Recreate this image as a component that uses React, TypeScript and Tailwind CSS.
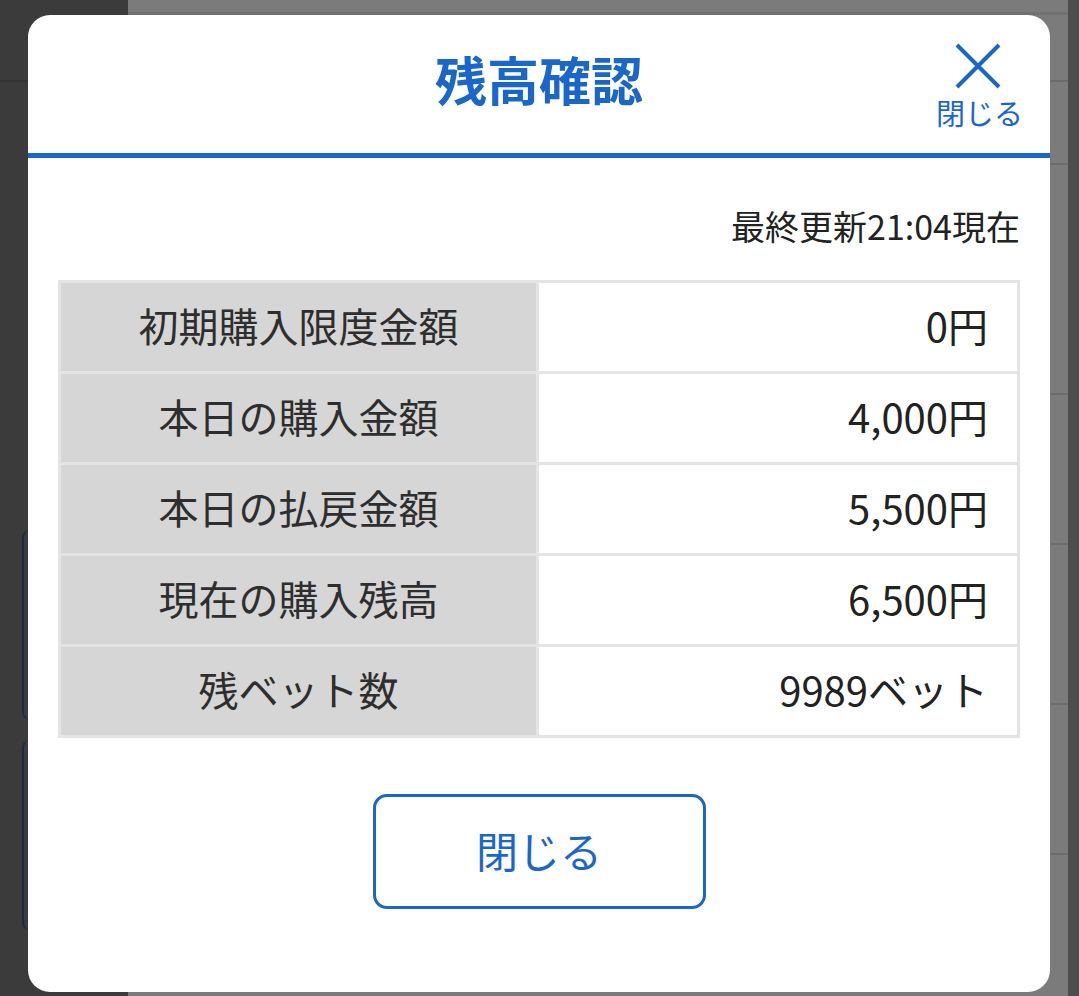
import React from 'react';

const rows: { label: string; value: string }[] = [
  { label: '初期購入限度金額', value: '0円' },
  { label: '本日の購入金額', value: '4,000円' },
  { label: '本日の払戻金額', value: '5,500円' },
  { label: '現在の購入残高', value: '6,500円' },
  { label: '残ベット数', value: '9989ベット' },
];

const font = { fontFamily: '"Noto Sans CJK JP", "Noto Sans", sans-serif' };

const Backdrop: React.FC = () => (
  <div className="flex h-full w-full">
    <div className="w-[128px] bg-[#3b3b3b] flex flex-col">
      <div className="h-[82px] border-b-[2px] border-[#333]" />
      <div className="mt-[448px] ml-[22px] h-[190px] w-[20px] rounded-l-[8px] border-l-[2px] border-[#1c2a40]" />
      <div className="mt-[20px] ml-[22px] h-[190px] w-[20px] rounded-l-[8px] border-l-[2px] border-[#1c2a40]" />
    </div>
    <div className="flex-1 bg-[#7b7b7b] flex flex-col">
      <div className="h-[15px] border-b-[3px] border-[#707070]" />
      <div className="h-[67px] border-b-[2px] border-[#6c6c6c]" />
      <div className="h-[83px] border-b-[2px] border-[#6c6c6c]" />
      <div className="h-[230px] border-b-[2px] border-[#6c6c6c]" />
      <div className="h-[150px] border-b-[2px] border-[#6c6c6c]" />
      <div className="h-[160px] border-b-[2px] border-[#6c6c6c]" />
      <div className="h-[150px] border-b-[2px] border-[#6c6c6c]" />
    </div>
    <div className="w-[11px] bg-[#4d4d4d]" />
  </div>
);

export default function App() {
  return (
    <div className="relative h-[996px] w-full overflow-hidden" style={font}>
      <Backdrop />
      <div className="absolute left-[28px] top-[15px] w-[1022px] h-[977px] bg-white rounded-[22px] overflow-hidden flex flex-col">
        <div className="relative h-[138px] flex items-center justify-center">
          <h1 className="text-[52px] font-bold text-[#1b66c9] leading-none mb-[10px]">残高確認</h1>
          <button className="absolute right-[29px] top-[28px] flex flex-col items-center text-[#1b66c9]">
            <svg width="48" height="46" viewBox="0 0 48 46" fill="none" stroke="#1b66c9" strokeWidth="4">
              <path d="M3 2 L45 44 M45 2 L3 44" />
            </svg>
            <span className="text-[29px] leading-none mt-[9px] -mr-[2px]">閉じる</span>
          </button>
        </div>
        <div className="h-[5px] bg-[#1b66c9]" />
        <div className="px-[30px] flex flex-col">
          <p className="text-right text-[34px] text-[#222] mt-[51px] leading-none">最終更新21:04現在</p>
          <table className="mt-[37px] w-full border-collapse border-[3px] border-[#e4e4e4]">
            <tbody>
              {rows.map((r) => (
                <tr key={r.label}>
                  <td className="w-[478px] h-[91px] border-[3px] border-[#e4e4e4] bg-[#d6d6d6] text-center text-[40px] text-[#2e2e2e] leading-none pb-[4px]">
                    {r.label}
                  </td>
                  <td className="h-[91px] border-[3px] border-[#e4e4e4] bg-white text-right pr-[29px] text-[40px] text-[#222] leading-none pb-[4px]">
                    {r.value}
                  </td>
                </tr>
              ))}
            </tbody>
          </table>
          <div className="flex justify-center mt-[56px]">
            <button className="w-[333px] h-[115px] rounded-[14px] border-[3px] border-[#1b66c9] text-[#1b66c9] text-[42px] leading-none pb-[4px]">
              閉じる
            </button>
          </div>
        </div>
      </div>
    </div>
  );
}
